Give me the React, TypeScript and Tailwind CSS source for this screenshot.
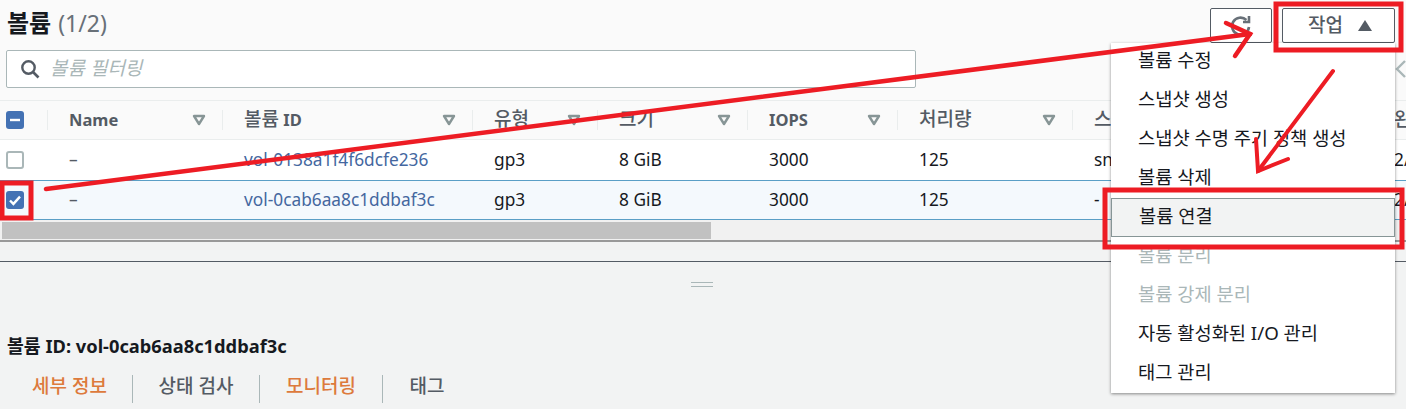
import React from 'react';

const COLUMNS = 'grid grid-cols-[47px_175px_250px_125px_150px_150px_175px_300px_60px]';

const HEADERS = [
  { ko: '', latin: 'Name' },
  { ko: '볼륨', latin: ' ID' },
  { ko: '유형', latin: '' },
  { ko: '크기', latin: '' },
  { ko: '', latin: 'IOPS' },
  { ko: '처리량', latin: '' },
  { ko: '스냅샷', latin: '' },
  { ko: '완', latin: '' },
];

const ROWS = [
  { id: 'vol-0138a1f4f6dcfe236', snapshot: 'sn', selected: false },
  { id: 'vol-0cab6aa8c1ddbaf3c', snapshot: '-', selected: true },
];

const MENU_ITEMS = [
  { label: '볼륨 수정' },
  { label: '스냅샷 생성' },
  { label: '스냅샷 수명 주기 정책 생성' },
  { label: '볼륨 삭제' },
  { label: '볼륨 연결', active: true },
  { label: '볼륨 분리', disabled: true },
  { label: '볼륨 강제 분리', disabled: true },
  { label: '자동 활성화된 I/O 관리' },
  { label: '태그 관리' },
];

const TABS = [
  { label: '세부 정보', width: 'w-[133px] pl-[7px]', orange: true, divider: true },
  { label: '상태 검사', width: 'w-[127px]', orange: false, divider: true },
  { label: '모니터링', width: 'w-[123px]', orange: true, divider: true },
  { label: '태그', width: 'w-[88px]', orange: false, divider: false },
];

const FilterIcon = () => (
  <svg width="14" height="12" viewBox="0 0 14 12" className="shrink-0">
    <path d="M2 2h10L7 10z" fill="none" stroke="#879596" strokeWidth="2.4" strokeLinejoin="round" />
  </svg>
);

const Checkbox = ({ state }: { state: 'none' | 'some' | 'all' }) => {
  if (state === 'none') {
    return <div className="w-[18px] h-[18px] rounded-[3px] border-2 border-[#aab7b8] bg-white" />;
  }
  return (
    <div className="w-[18px] h-[18px] rounded-[3px] bg-[#4472b4] flex items-center justify-center">
      <svg width="14" height="14" viewBox="0 0 14 14">
        {state === 'some' ? (
          <path d="M2 7h10" stroke="#fff" strokeWidth="2.4" fill="none" />
        ) : (
          <path d="M2 7.5l3.4 3.4L12 3.6" stroke="#fff" strokeWidth="2.4" fill="none" />
        )}
      </svg>
    </div>
  );
};

const Annotations = () => (
  <svg width="1406" height="409" className="absolute left-0 top-0 pointer-events-none">
    <g fill="none" stroke="#ed1c24">
      <rect x="2" y="183" width="29" height="35" strokeWidth="5" />
      <rect x="1276" y="4" width="125" height="46" strokeWidth="5" />
      <rect x="1105" y="190" width="297" height="57" strokeWidth="5" />
      <g strokeWidth="4.5" strokeLinecap="round">
        <path d="M46 189L1250 34" />
        <path d="M1226 23L1250 34L1235 56" />
      </g>
      <g strokeWidth="4" strokeLinecap="round">
        <path d="M1333 71L1258 171" />
        <path d="M1256 139L1258 171L1288 159" />
      </g>
    </g>
  </svg>
);

export default function App() {
  return (
    <div className="relative w-[1406px] h-[409px] overflow-hidden bg-[#f2f3f3] text-[#16191f] font-['Noto_Sans','Noto_Sans_CJK_KR',sans-serif]">
      {/* top bar + filter */}
      <div className="h-[100px] bg-[#fafafa] px-[6px] pt-[5px]">
        <div className="h-[36px] flex items-center pl-px text-[24px] leading-[30px]">
          <span className="font-bold">볼륨</span>
          <span className="ml-[7px] text-[23px] text-[#687078]">(1/2)</span>
        </div>
        <div className="mt-[9px] w-[910px] h-[38px] flex items-center gap-[10px] px-[13px] bg-white border border-[#aab7b8] rounded-[2px]">
          <svg width="20" height="20" viewBox="0 0 20 20" className="shrink-0">
            <circle cx="8.5" cy="8.5" r="6.2" fill="none" stroke="#545b64" strokeWidth="2.4" />
            <path d="M13 13l5.5 5.5" stroke="#545b64" strokeWidth="2.6" fill="none" />
          </svg>
          <span className="italic text-[19px] leading-[26px] pb-[3px] text-[#aab7b8] whitespace-nowrap">볼륨 필터링</span>
        </div>
      </div>

      {/* table */}
      <div className={`${COLUMNS} items-center h-[40px] bg-[#fafafa] border-y border-[#eaeded]`}>
        <div className="flex items-center pl-[6px]">
          <Checkbox state="some" />
        </div>
        {HEADERS.map(h => (
          <div key={h.ko + h.latin} className="h-[20px] flex items-center border-l border-[#eaeded] pl-[21px] pr-[16px] justify-between">
            <span className="text-[16.5px] font-bold leading-[20px] pb-px text-[#545b64] whitespace-pre">
              {h.ko && <span className="text-[19px] font-medium">{h.ko}</span>}
              {h.latin}
            </span>
            <FilterIcon />
          </div>
        ))}
      </div>
      {ROWS.map(r => (
        <div
          key={r.id}
          className={`${COLUMNS} items-center text-[17.3px] leading-[24px] ${r.selected ? 'h-[40px] bg-[#f4f9fd] border-y border-[#5a9fc6]' : 'h-[40px] bg-white'}`}
        >
          <div className="flex items-center pl-[6px]">
            <Checkbox state={r.selected ? 'all' : 'none'} />
          </div>
          <div className="pl-[22px] text-[#545b64]">–</div>
          <div className="pl-[22px] text-[#44679f]">{r.id}</div>
          <div className="pl-[22px]">gp3</div>
          <div className="pl-[22px]">8 GiB</div>
          <div className="pl-[22px]">3000</div>
          <div className="pl-[22px]">125</div>
          <div className="pl-[22px]">{r.snapshot}</div>
          <div className="pl-[22px]">2/</div>
        </div>
      ))}

      {/* horizontal scrollbar */}
      <div className="h-[22px] bg-[#f1f1f1] pt-[2px] pl-[2px] border-b-2 border-[#999]">
        <div className="w-[709px] h-[17px] bg-[#c1c1c1]" />
      </div>
      <div className="h-[20px] border-b border-[#545b64]" />

      {/* split panel */}
      <div className="flex justify-center pt-[20px] pr-[2px]">
        <div className="w-[22px] h-[5px] border-y border-[#aab7b8]" />
      </div>
      <div className="mt-[47px] pl-[7px] text-[18.3px] font-bold leading-[24px] whitespace-nowrap">
        볼륨 ID: vol-0cab6aa8c1ddbaf3c
      </div>
      <div className="flex mt-[17px] h-[28px]">
        {TABS.map(t => (
          <div
            key={t.label}
            className={`${t.width} flex items-center justify-center text-[19px] leading-[24px] pb-[6px] font-medium ${t.orange ? 'text-[#dd7a3c]' : 'text-[#545b64]'} ${t.divider ? 'border-r border-[#aab7b8]' : ''}`}
          >
            {t.label}
          </div>
        ))}
      </div>

      {/* pagination chevron peeking out past the menu */}
      <svg width="12" height="20" viewBox="0 0 12 20" className="absolute left-[1395px] top-[59px]">
        <path d="M10 2L2 10l8 8" fill="none" stroke="#aab7b8" strokeWidth="2.4" />
      </svg>

      {/* refresh + actions */}
      <div className="absolute left-[1210px] top-[8px] flex gap-[10px]">
        <button className="w-[62px] h-[35px] flex items-center justify-center bg-white border border-[#545b64] rounded-[2px]">
          <svg width="24" height="24" viewBox="0 0 24 24" fill="none" stroke="#687078" strokeWidth="2.6">
            <path d="M20 13a8.5 8.5 0 1 1-2.6-7" />
            <path d="M20 2v6h-6" />
          </svg>
        </button>
        <button className="w-[113px] h-[35px] flex items-center justify-center gap-[15px] pl-[3px] pb-[2px] bg-white border border-[#545b64] rounded-[2px] text-[19px] leading-[24px] font-medium text-[#545b64]">
          작업
          <svg width="14" height="11" viewBox="0 0 14 11" className="mt-[2px]">
            <path d="M7 0l7 11H0z" fill="#545b64" />
          </svg>
        </button>
      </div>

      {/* actions dropdown */}
      <div className="absolute left-[1111px] top-[43px] w-[284px] h-[350px] bg-white shadow-[0_1px_3px_rgba(0,0,0,0.45)] flex flex-col">
        <div className="-mt-px">
          {MENU_ITEMS.map(m => (
            <div
              key={m.label}
              className={`h-[39px] flex items-center pl-[27px] pb-[3px] text-[18.7px] leading-[26px] whitespace-nowrap ${
                m.active ? 'bg-[#f2f3f3] border border-[#879596] pl-[26px]' : ''
              } ${m.disabled ? 'text-[#aab7b8]' : 'text-[#16191f]'}`}
            >
              {m.label}
            </div>
          ))}
        </div>
      </div>

      <Annotations />
    </div>
  );
}
